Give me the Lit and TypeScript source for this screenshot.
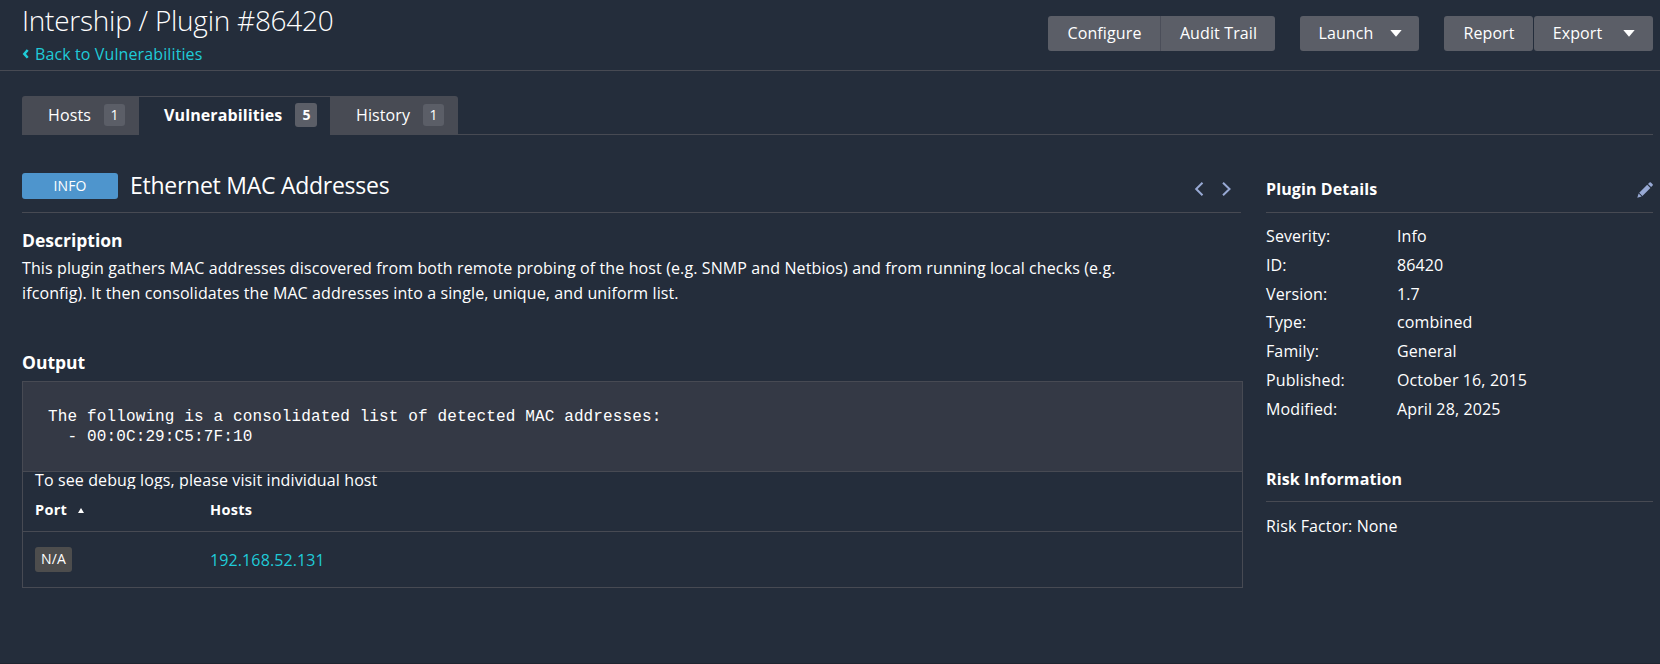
import { LitElement, html, css } from "lit";
import { customElement } from "lit/decorators.js";

const DETAILS: [string, string][] = [
  ["Severity:", "Info"],
  ["ID:", "86420"],
  ["Version:", "1.7"],
  ["Type:", "combined"],
  ["Family:", "General"],
  ["Published:", "October 16, 2015"],
  ["Modified:", "April 28, 2025"],
];

const caret = html`<svg class="caret" width="12" height="7" viewBox="0 0 12 7"><path d="M0.3 0h11.400L6 6.800z" fill="#fff" /></svg>`;

@customElement("app-root")
export class AppRoot extends LitElement {
  static styles = css`
    :host { display: block; }
    * { box-sizing: border-box; }
    .page { height: 664px; background: #242d3b; color: #fff; font: 16px/24px "Open Sans", sans-serif; letter-spacing: 0.115px; overflow: hidden; border-bottom: 1px solid #1f2530; }
    .header { height: 71px; border-bottom: 1px solid #474a53; padding: 0 7px 0 22px; display: flex; justify-content: space-between; }
    .title { margin: 1px 0 0; font-size: 28px; line-height: 38px; font-weight: 300; letter-spacing: -0.25px; }
    .back { display: flex; align-items: center; color: #1fcbd8; line-height: 24px; margin-top: 3px; gap: 6px; }
    .actions { display: flex; padding-top: 16px; }
    .btn { height: 35px; background: #5b5e67; border-radius: 3px; display: flex; align-items: center; justify-content: center; padding: 0 0 1px 1px; }
    .caret { flex: none; }
    .configure { width: 113px; border-radius: 3px 0 0 3px; border-right: 1px solid #4b4e59; }
    .audit { width: 114px; border-radius: 0 3px 3px 0; }
    .launch { width: 119px; margin-left: 25px; gap: 16px; }
    .report { width: 89px; margin-left: 25px; }
    .export { width: 119px; margin-left: 1px; gap: 21px; }
    .tabs { margin: 25px 7px 0 22px; height: 39px; display: flex; border-bottom: 1px solid #474a53; }
    .tab { height: 39px; background: #484b54; display: flex; align-items: center; padding: 0 0 2px 26px; gap: 13px; }
    .tab-hosts { width: 117px; border-radius: 3px 0 0 0; }
    .tab-active { width: 191px; background: #242d3b; border-top: 1px solid #474a53; font-weight: 700; padding: 0 0 3px 25px; }
    .tab-history { width: 128px; border-radius: 0 3px 0 0; }
    .count { width: 21px; height: 22px; border-radius: 3px; background: #5b5e67; font-size: 14px; line-height: 22px; text-align: center; }
    .count-active { height: 24px; width: 22px; line-height: 24px; }
    .content { display: flex; padding: 0 7px 0 22px; }
    .main { width: 1221px; }
    .side { width: 387px; margin-left: 23px; }
    .heading { width: 1219px; height: 78px; border-bottom: 1px solid #474a53; display: flex; align-items: flex-start; padding-top: 38px; }
    .severity { width: 96px; height: 26px; border-radius: 3px; background: #4e95cd; font-size: 14px; line-height: 26px; text-align: center; }
    .name { margin: -4px 0 0 12px; font-size: 23px; line-height: 32px; font-weight: 400; letter-spacing: -0.26px; flex: 1; }
    .pager { display: flex; gap: 16px; margin: 9px 9px 0 0; }
    h3 { margin: 0; font-size: 17.5px; line-height: 25px; font-weight: 700; letter-spacing: 0; }
    .desc-title { margin-top: 15px; }
    .desc { margin: 3px 0 0; line-height: 25px; width: 1110px; }
    .out-title { margin-top: 44px; }
    .output { margin-top: 6px; border: 1px solid #474a53; height: 207px; }
    .log { margin: 0; height: 90px; padding: 25px 25px 0; background: #343945; border-bottom: 1px solid #474a53; font: 16px/20px "Liberation Mono", monospace; letter-spacing: 0.137px; }
    .debug { height: 17px; overflow: hidden; padding-left: 12px; line-height: 17px; }
    .row { display: grid; grid-template-columns: 175px 1fr; padding-left: 12px; align-items: center; }
    .row-head { height: 43px; border-bottom: 1px solid #474a53; font-size: 14.5px; font-weight: 700; letter-spacing: 0.3px; }
    .port { display: flex; align-items: center; gap: 11px; }
    .row-body { height: 55px; }
    .na { display: block; width: 37px; height: 25px; border-radius: 3px; background: #4d4d4d; font-size: 14px; line-height: 24px; text-align: center; }
    .host { color: #1fcbd8; }
    .side-head { display: flex; justify-content: space-between; border-bottom: 1px solid #474a53; font-weight: 700; }
    .side-details { height: 78px; padding-top: 42px; }
    .details { margin: 9px 0 0; display: grid; grid-template-columns: 131px 1fr; line-height: 28.8px; }
    .side-risk { height: 35px; margin-top: 43px; }
    .risk { margin-top: 12px; }
    .pencil { margin-top: 5px; }
  `;

  render() {
    return html`
      <div class="page">
        <header class="header">
          <div>
            <h1 class="title">Intership / Plugin #86420</h1>
            <a class="back"><svg width="7" height="10" viewBox="0 0 7 10"><path d="M5.700 1L2.300 4.900l3.400 3.900" fill="none" stroke="#1fcbd8" stroke-width="2.500" /></svg><span>Back to Vulnerabilities</span></a>
          </div>
          <div class="actions">
            <div class="btn configure">Configure</div>
            <div class="btn audit">Audit Trail</div>
            <div class="btn launch"><span>Launch</span>${caret}</div>
            <div class="btn report">Report</div>
            <div class="btn export"><span>Export</span>${caret}</div>
          </div>
        </header>
        <nav class="tabs">
          <div class="tab tab-hosts"><span>Hosts</span><span class="count">1</span></div>
          <div class="tab tab-active"><span>Vulnerabilities</span><span class="count count-active">5</span></div>
          <div class="tab tab-history"><span>History</span><span class="count">1</span></div>
        </nav>
        <div class="content">
          <main class="main">
            <div class="heading">
              <div class="severity">INFO</div>
              <h2 class="name">Ethernet MAC Addresses</h2>
              <div class="pager">
                <svg width="11" height="14" viewBox="0 0 11 14"><path d="M8.500 .8L2.200 7l6.300 6.200" fill="none" stroke="#98a9d4" stroke-width="2" /></svg>
                <svg width="11" height="14" viewBox="0 0 11 14"><path d="M2 .8L8.500 7 2 13.200" fill="none" stroke="#98a9d4" stroke-width="2" /></svg>
              </div>
            </div>
            <h3 class="desc-title">Description</h3>
            <p class="desc">This plugin gathers MAC addresses discovered from both remote probing of the host (e.g. SNMP and Netbios) and from running local checks (e.g. ifconfig). It then consolidates the MAC addresses into a single, unique, and uniform list.</p>
            <h3 class="out-title">Output</h3>
            <section class="output">
              <pre class="log">The following is a consolidated list of detected MAC addresses:
  - 00:0C:29:C5:7F:10</pre>
              <div class="debug">To see debug logs, please visit individual host</div>
              <div class="row row-head">
                <span class="port">Port<svg width="6" height="5" viewBox="0 0 6 5"><path d="M0 5L3 0l3 5z" fill="#fff" /></svg></span>
                <span>Hosts</span>
              </div>
              <div class="row row-body"><span class="na">N/A</span><a class="host">192.168.52.131</a></div>
            </section>
          </main>
          <aside class="side">
            <div class="side-head side-details">
              <span>Plugin Details</span>
              <svg class="pencil" width="16" height="16" viewBox="0 0 16 16" fill="#98a9d4"><path d="M11 2l1.500-1.500a1 1 0 0 1 1.400 0l1.700 1.700a1 1 0 0 1 0 1.400L14.100 5.100zM10.200 2.700l3.200 3.200-8 8L2.200 10.700zM1.600 11.500l3 3L.3 15.700z" /></svg>
            </div>
            <div class="details">${DETAILS.map(([k, v]) => html`<span>${k}</span><span>${v}</span>`)}</div>
            <div class="side-head side-risk">Risk Information</div>
            <div class="risk">Risk Factor: None</div>
          </aside>
        </div>
      </div>
    `;
  }
}
